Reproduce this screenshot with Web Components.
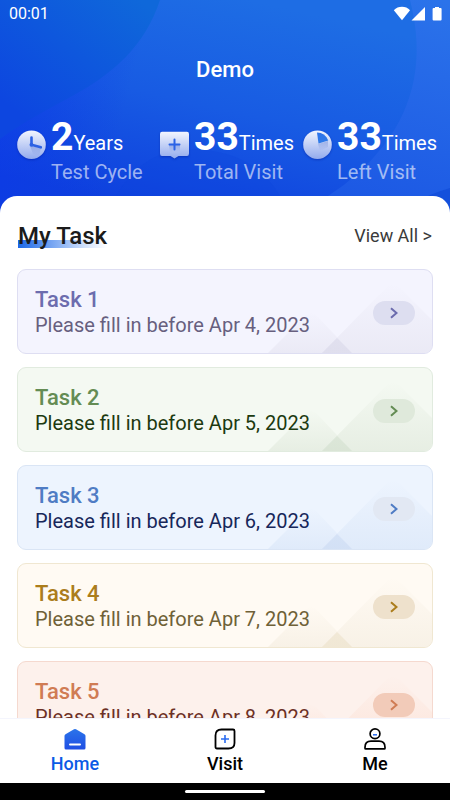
<!DOCTYPE html>
<html lang="en">
<head>
<meta charset="utf-8">
<meta name="viewport" content="width=device-width, initial-scale=1">
<title>Demo</title>
<style>
html, body { margin: 0; height: 100%; background: #fff; }
body { font-family: Roboto, "Liberation Sans", sans-serif; color: #1b1b1b; }
</style>
</head>
<body>
<demo-app></demo-app>
<script>
const define = (name, html, setup) => {
  const template = document.createElement('template');
  template.innerHTML = html;
  customElements.define(name, class extends HTMLElement {
    constructor() {
      super();
      this.attachShadow({ mode: 'open' }).append(template.content.cloneNode(true));
    }
    connectedCallback() { if (setup) setup(this, this.shadowRoot); }
  });
};

define('status-bar', `
<style>
:host { display: flex; align-items: center; justify-content: space-between; height: 28px; padding: 0 8px 0 9px; color: #fff; font-size: 16px; line-height: 20px; }
svg { display: block; }
</style>
<span><slot></slot></span>
<svg width="50" height="16" viewBox="0 0 50 16" fill="#fff" aria-hidden="true">
  <path d="M1.8 4.2C6-0.4 14-0.4 18 4.2L10 14.2Z"/>
  <path d="M33 1v13.5H19.5Z"/>
  <path d="M43 1h4v1h1.600q1 0 1 1v10.500q0 1-1 1h-7q-1 0-1-1V3q0-1 1-1H43Z"/>
</svg>`);

define('stat-item', `
<style>
:host { display: grid; grid-template-columns: 29px 1fr; column-gap: 5px; row-gap: 3px; color: #fff; white-space: nowrap; }
.icon { align-self: end; height: 33px; margin-bottom: -6px; }
.value { font-size: 20px; line-height: 40px; height: 40px; }
b { font-size: 39px; font-weight: 700; line-height: 40px; }
.label { grid-column: 2; font-size: 20px; line-height: 24px; color: rgba(255,255,255,.6); }
</style>
<div class="icon"><slot name="icon"></slot></div>
<div class="value"><b><slot name="value"></slot></b><slot name="unit"></slot></div>
<div class="label"><slot></slot></div>`);

define('stat-icon', `
<style>
:host { display: block; }
svg { display: block; overflow: visible; filter: drop-shadow(0 1px 1px rgba(0,20,140,.4)); }
g { display: none; }
:host([name="clock"]) .clock, :host([name="visit"]) .visit, :host([name="pie"]) .pie { display: block; }
</style>
<svg width="29" height="33" viewBox="0 0 29 33" aria-hidden="true">
  <defs>
    <linearGradient id="f" x1="0" y1="0" x2="0" y2="1"><stop offset="0" stop-color="#f2f5fe"/><stop offset="1" stop-color="#93abed"/></linearGradient>
    <linearGradient id="d" x1="0" y1="0" x2="0" y2="1"><stop offset="0" stop-color="#2d73ea"/><stop offset="1" stop-color="#2f7be8"/></linearGradient>
    <linearGradient id="s" x1="0" y1="0" x2="0" y2="1"><stop offset="0" stop-color="#7d96dc" stop-opacity=".6"/><stop offset="1" stop-color="#7d96dc" stop-opacity="0"/></linearGradient>
  </defs>
  <g class="clock">
    <circle cx="14.500" cy="14.700" r="14.300" fill="url(#f)"/>
    <path d="M13 16L24 18L22 26L16 24Z" fill="url(#s)"/>
    <path d="M14.500 7.500V14.800L23.800 17.300" fill="none" stroke="#2c62e4" stroke-width="2.600" stroke-linecap="round" stroke-linejoin="round"/>
    <circle cx="14.500" cy="14.800" r="2" fill="#2c62e4"/>
  </g>
  <g class="visit">
    <path d="M2 1.800H27Q29 1.800 29 4V23.500Q29 26 27 26H18.500L14.500 28.500L10.500 26H2Q0 26 0 23.500V4Q0 1.800 2 1.800Z" fill="url(#f)"/>
    <path d="M9 15H20V22H10Z" fill="url(#s)"/>
    <path d="M14.500 9.500V19.500M9.500 14.500H19.500" stroke="#2a62e6" stroke-width="2" stroke-linecap="round"/>
  </g>
  <g class="pie">
    <circle cx="14.500" cy="14.700" r="14.300" fill="url(#f)"/>
    <path d="M15 14L25 11L25 17L17 21Z" fill="url(#s)"/>
    <path d="M14 2.500Q22 2.500 25.300 10.500L15.500 13.500Z" fill="url(#d)"/>
  </g>
</svg>`);

define('hero-header', `
<style>
:host { display: block; position: relative; padding-bottom: 12px; color: #fff; }
.art { position: absolute; inset: 0 0 -24px 0; width: 100%; height: calc(100% + 24px); }
.content { position: relative; }
h1 { margin: 0; padding: 28px 0 33px; font-size: 22px; font-weight: 500; line-height: 28px; text-align: center; }
.stats { display: grid; grid-template-columns: repeat(3, 1fr); padding: 0 4px 0 17px; }
</style>
<svg class="art" viewBox="0 0 450 220" preserveAspectRatio="none" aria-hidden="true">
  <defs>
    <linearGradient id="base" gradientUnits="userSpaceOnUse" x1="250" y1="0" x2="200" y2="220"><stop offset="0" stop-color="#1e6de4"/><stop offset=".5" stop-color="#185be3"/><stop offset="1" stop-color="#0e40de"/></linearGradient>
    <linearGradient id="left" gradientUnits="userSpaceOnUse" x1="140" y1="0" x2="40" y2="130"><stop offset="0" stop-color="#0f68da"/><stop offset="1" stop-color="#0d46e0"/></linearGradient>
    <linearGradient id="right" gradientUnits="userSpaceOnUse" x1="440" y1="0" x2="380" y2="210"><stop offset="0" stop-color="#2b73ea"/><stop offset="1" stop-color="#1c58e4"/></linearGradient>
    <linearGradient id="low" gradientUnits="userSpaceOnUse" x1="0" y1="100" x2="120" y2="130"><stop offset="0" stop-color="#0c38e8" stop-opacity=".6"/><stop offset="1" stop-color="#0c38e8" stop-opacity="0"/></linearGradient>
  </defs>
  <rect width="450" height="220" fill="url(#base)"/>
  <rect width="450" height="220" fill="url(#low)"/>
  <path d="M0 0H160C145 45 115 74 65 100Q20 124 0 139Z" fill="url(#left)"/>
  <path d="M410 0C425 58 414 105 385 144Q360 176 328 196L300 220H450V0Z" fill="url(#right)"/>
  <path d="M116 196Q140 154 180 150Q250 145 280 196V220H100Z" fill="#0c42dc" fill-opacity=".25"/>
  <path d="M450 188Q430 194 420 200V220H450Z" fill="#1450dc"/>
</svg>
<div class="content">
  <status-bar>00:01</status-bar>
  <h1><slot></slot></h1>
  <div class="stats"><slot name="stats"></slot></div>
</div>`);

define('task-card', `
<style>
:host { display: flex; position: relative; overflow: hidden; align-items: center; justify-content: space-between; box-sizing: border-box; padding: 17px 17px 15px; border: 1px solid var(--line); border-radius: 9px; background: var(--fill); }
h3, p { margin: 0; white-space: nowrap; }
h3 { font-size: 22px; font-weight: 500; line-height: 26px; color: var(--accent); }
p { font-size: 20px; line-height: 25px; color: var(--text); }
.text { position: relative; }
button { position: relative; display: grid; place-items: center; width: 42px; height: 24px; padding: 0; border: 0; border-radius: 12px; background: var(--pill); }
.peaks { position: absolute; right: -1px; bottom: -1px; }
</style>
<svg class="peaks" width="170" height="85" viewBox="0 0 170 85" aria-hidden="true">
  <defs>
    <linearGradient id="g" gradientUnits="userSpaceOnUse" x1="0" y1="14" x2="0" y2="85"><stop offset="0" style="stop-color:var(--peak)" stop-opacity="0"/><stop offset="1" style="stop-color:var(--peak)" stop-opacity=".8"/></linearGradient>
    <linearGradient id="h" gradientUnits="userSpaceOnUse" x1="0" y1="42" x2="0" y2="85"><stop offset="0" style="stop-color:var(--peak)" stop-opacity="0"/><stop offset="1" style="stop-color:var(--peak)" stop-opacity=".8"/></linearGradient>
  </defs>
  <path d="M4 85L43 46Q48 42 53 46L90 85Z" fill="url(#h)"/>
  <path d="M58 85L124 18Q130 13 136 18L170 52V85Z" fill="url(#g)"/>
  <path d="M58 85L74 69L90 85Z" fill="var(--accent)" fill-opacity=".07"/>
</svg>
<div class="text"><h3><slot></slot></h3><p><slot name="due"></slot></p></div>
<button aria-label="Open task"><svg width="8" height="12" viewBox="0 0 8 12" fill="none" stroke="var(--accent)" stroke-width="2" aria-hidden="true"><path d="M1 1.200L6.500 6L1 10.800"/></svg></button>`);

define('task-sheet', `
<style>
:host { display: block; position: relative; flex: 1; min-height: 0; overflow-y: auto; scrollbar-width: none; box-sizing: border-box; padding: 24px 17px 0; border-radius: 17px 17px 0 0; background: #fff; }
header { display: flex; align-items: center; justify-content: space-between; margin-bottom: 17px; padding: 0 1px; }
h2 { margin: 0; font-size: 24px; font-weight: 500; line-height: 32px; background: linear-gradient(90deg, #1c68e6, #7fabf3 42%, #d0e0fb 75%, #fff) 0 20px / 100% 8px no-repeat; }
a { font-size: 18px; line-height: 24px; color: #3a3a3a; text-decoration: none; }
.list { display: grid; gap: 13px; }
</style>
<header><h2><slot name="title"></slot></h2><a href="#all"><slot name="more"></slot></a></header>
<div class="list"><slot></slot></div>`);

define('tab-link', `
<style>
:host { display: block; flex: 1; }
a { display: grid; justify-items: center; gap: 4px; padding: 9px 0; color: #000; font-size: 18px; font-weight: 500; line-height: 20px; text-decoration: none; }
:host([active]) a { color: #0b5be6; }
</style>
<a><slot name="icon"></slot><span><slot></slot></span></a>`,
(host, root) => { root.querySelector('a').href = '#' + host.textContent.trim().toLowerCase(); });

define('tab-icon', `
<style>
:host { display: block; }
svg { display: block; }
g { display: none; }
:host([name="home"]) .home, :host([name="visit"]) .visit, :host([name="me"]) .me { display: block; }
</style>
<svg width="22" height="22" viewBox="0 0 22 22" fill="none" aria-hidden="true">
  <defs><linearGradient id="h" x1="0" y1="0" x2="0" y2="1"><stop offset="0" stop-color="#2b74ea"/><stop offset="1" stop-color="#1f4ee4"/></linearGradient></defs>
  <g class="home">
    <path d="M10 1.200Q11 .6 12 1.200L20.500 6.300Q21.500 7 21.500 8V20Q21.500 21.500 20 21.500H2Q.5 21.500 .5 20V8Q.5 7 1.500 6.300Z" fill="url(#h)"/>
    <path d="M6 16.500H16" stroke="#fff" stroke-width="2" stroke-linecap="round"/>
  </g>
  <g class="visit">
    <path d="M7.500 1.500H19Q20.500 1.500 20.500 3V15Q20.500 20.500 14.500 20.500H3Q1.500 20.500 1.500 19V7.500Q1.500 1.500 7.500 1.500Z" stroke="#000" stroke-width="1.800"/>
    <path d="M11 7V15M7 11H15" stroke="#2a6cf0" stroke-width="1.600"/>
  </g>
  <g class="me">
    <circle cx="11" cy="5.800" r="4.900" stroke="#000" stroke-width="1.700"/>
    <path d="M9 6.800H13" stroke="#2a6cf0" stroke-width="1.500"/>
    <path d="M1 20.200V19.200Q1 13.200 7 13.200H15Q21 13.200 21 19.200V20.200Q21 20.900 20.300 20.900H1.700Q1 20.900 1 20.200Z" stroke="#000" stroke-width="1.700"/>
  </g>
</svg>`);

define('tab-bar', `
<style>
:host { display: block; position: relative; background: #fff; border-top: 1px solid #f4f5fd; }
nav { display: flex; }
</style>
<nav><slot></slot></nav>`);

define('gesture-bar', `
<style>
:host { display: grid; place-items: center; height: 17px; background: #000; }
i { width: 80px; height: 3px; border-radius: 2px; background: #fff; }
</style><i></i>`);

define('demo-app', `
<style>
:host { display: flex; flex-direction: column; height: 100vh; overflow: hidden; }
.t1 { --fill: #f4f4fe; --line: #dedef2; --accent: #6c6cae; --text: #675f7e; --pill: #dddef0; --peak: #e8e7f3; }
.t2 { --fill: #f4f9f2; --line: #e1ebdf; --accent: #648c54; --text: #1c3a10; --pill: #dfe9db; --peak: #e3ebdf; }
.t3 { --fill: #edf4fe; --line: #dae5f5; --accent: #4f7cc4; --text: #17275a; --pill: #e2e8f3; --peak: #dce8f9; }
.t4 { --fill: #fffaf3; --line: #f0e7d1; --accent: #ab7d1c; --text: #6f6137; --pill: #eee1cc; --peak: #f6efe3; }
.t5 { --fill: #fdf1ec; --line: #f5d9cf; --accent: #d07c54; --text: #6c3026; --pill: #f2cbb9; --peak: #fce2d7; }
</style>
<hero-header>Demo
  <stat-item slot="stats"><stat-icon slot="icon" name="clock"></stat-icon><span slot="value">2</span><span slot="unit">Years</span>Test Cycle</stat-item>
  <stat-item slot="stats"><stat-icon slot="icon" name="visit"></stat-icon><span slot="value">33</span><span slot="unit">Times</span>Total Visit</stat-item>
  <stat-item slot="stats"><stat-icon slot="icon" name="pie"></stat-icon><span slot="value">33</span><span slot="unit">Times</span>Left Visit</stat-item>
</hero-header>
<task-sheet>
  <span slot="title">My Task</span><span slot="more">View All &gt;</span>
  <task-card class="t1">Task 1<span slot="due">Please fill in before Apr 4, 2023</span></task-card>
  <task-card class="t2">Task 2<span slot="due">Please fill in before Apr 5, 2023</span></task-card>
  <task-card class="t3">Task 3<span slot="due">Please fill in before Apr 6, 2023</span></task-card>
  <task-card class="t4">Task 4<span slot="due">Please fill in before Apr 7, 2023</span></task-card>
  <task-card class="t5">Task 5<span slot="due">Please fill in before Apr 8, 2023</span></task-card>
</task-sheet>
<tab-bar>
  <tab-link active><tab-icon slot="icon" name="home"></tab-icon>Home</tab-link>
  <tab-link><tab-icon slot="icon" name="visit"></tab-icon>Visit</tab-link>
  <tab-link><tab-icon slot="icon" name="me"></tab-icon>Me</tab-link>
</tab-bar>
<gesture-bar></gesture-bar>`);
</script>
</body>
</html>
